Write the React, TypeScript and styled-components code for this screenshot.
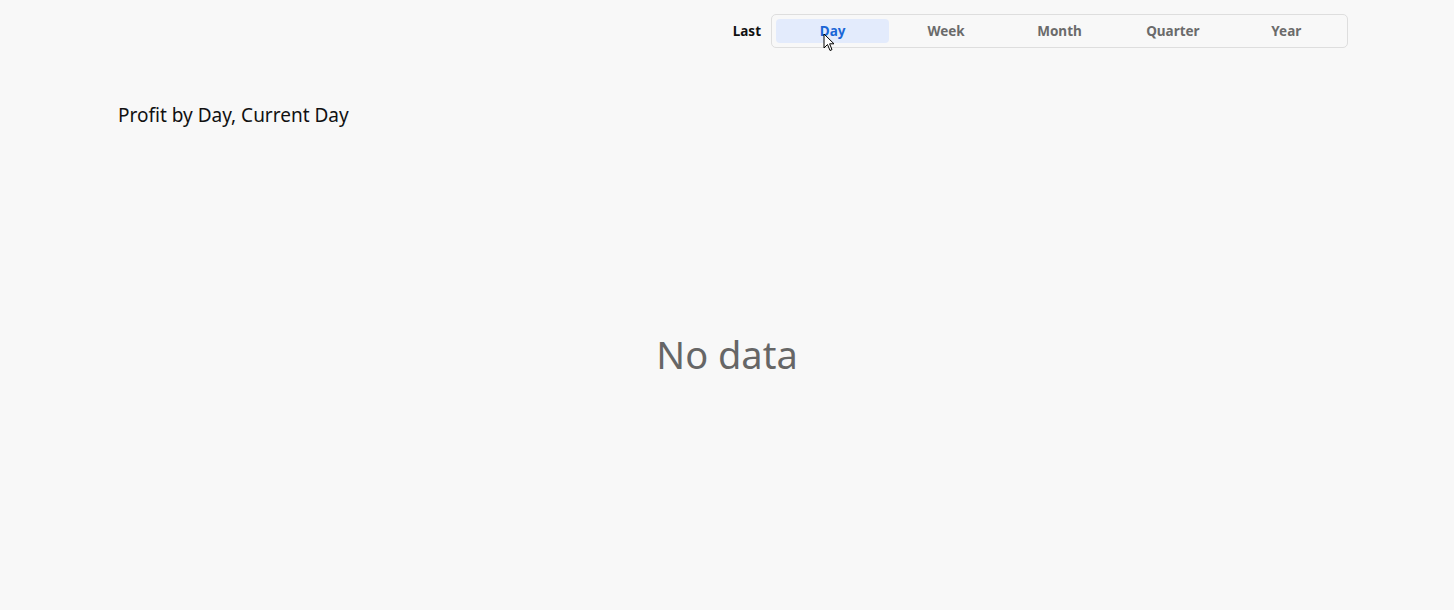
import { useState } from "react";
import styled, { createGlobalStyle } from "styled-components";

const GlobalStyle = createGlobalStyle`
    html, body {
        margin: 0;
        padding: 0;
        background: #f8f8f8;
        font-family: "Source Sans Pro", "Noto Sans", "Open Sans", sans-serif;
    }
`;

const periods = ["Day", "Week", "Month", "Quarter", "Year"];

export default function App() {
    const [period, setPeriod] = useState("Day");

    return (
        <Page>
            <GlobalStyle />
            <TopBar>
                <LastLabel>Last</LastLabel>
                <Segments>
                    {periods.map((p) => (
                        <Segment key={p} $active={p === period} onClick={() => setPeriod(p)}>
                            {p}
                            {p === "Day" && (
                                <Cursor viewBox="0 0 12 19" width="12" height="19">
                                    <path
                                        d="M1 1 L1 15 L4.5 11.5 L7 17.5 L9 16.6 L6.6 10.8 L11 10.8 Z"
                                        fill="#fff"
                                        stroke="#000"
                                        strokeWidth="1"
                                        strokeLinejoin="round"
                                    />
                                </Cursor>
                            )}
                        </Segment>
                    ))}
                </Segments>
            </TopBar>

            <ChartTitle>Profit by Day, Current Day</ChartTitle>

            <EmptyState>No data</EmptyState>
        </Page>
    );
}

const Page = styled.div`
    width: 1454px;
    height: 610px;
    display: flex;
    flex-direction: column;
    box-sizing: border-box;
    padding-top: 14px;
`;

const TopBar = styled.div`
    display: flex;
    justify-content: flex-end;
    align-items: center;
    gap: 10px;
    padding-right: 106px;
`;

const LastLabel = styled.span`
    font-size: 13.5px;
    font-weight: 700;
    color: #111;
`;

const Segments = styled.div`
    display: grid;
    grid-template-columns: repeat(5, 1fr);
    width: 567px;
    padding: 4px;
    border: 1px solid #dedede;
    border-radius: 5px;
`;

const Segment = styled.div<{ $active?: boolean }>`
    position: relative;
    height: 24px;
    display: flex;
    align-items: center;
    justify-content: center;
    border-radius: 4px;
    font-size: 13.5px;
    line-height: 22px;
    font-weight: 700;
    cursor: pointer;
    color: ${({ $active }) => ($active ? "#1a66d6" : "#6b6b6b")};
    background: ${({ $active }) => ($active ? "#e3ebfc" : "transparent")};
`;

const Cursor = styled.svg`
    position: absolute;
    left: 47px;
    top: 14px;
`;

const ChartTitle = styled.div`
    margin: 54px 0 0 118px;
    font-size: 19px;
    color: #111;
`;

const EmptyState = styled.div`
    flex: 1;
    display: flex;
    justify-content: center;
    align-items: flex-start;
    padding-top: 200px;
    font-size: 38px;
    color: #666;
`;
